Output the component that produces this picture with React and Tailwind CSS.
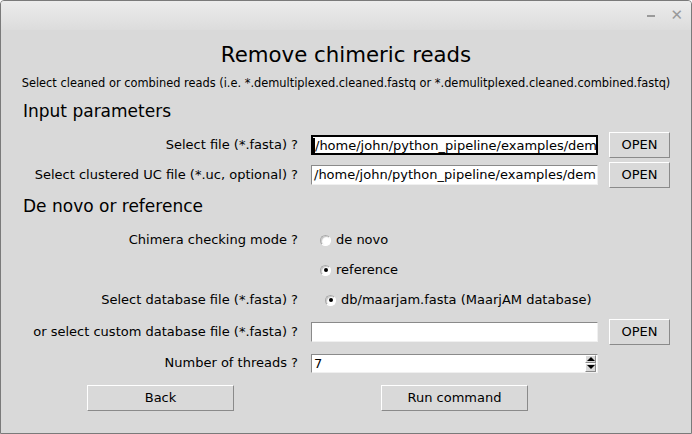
import React from "react";

const FONT = { fontFamily: '"DejaVu Sans", sans-serif' };

function Label({ children }) {
  return (
    <div className="w-[298px] shrink-0 pr-[1px] text-right text-[13px] text-black">
      {children}
    </div>
  );
}

function Entry({ value, focused }) {
  return (
    <div
      className={`ml-[12px] h-[20px] w-[287px] overflow-hidden whitespace-nowrap bg-white text-[13px] leading-[18px] text-black ${
        focused
          ? "border-2 border-black"
          : "border border-t-[#8a8a8a] border-l-[#8a8a8a] border-b-[#f0f0f0] border-r-[#f0f0f0]"
      }`}
    >
      <span className={focused ? "border-l-2 border-black pl-0" : "pl-[2px]"}>{value}</span>
    </div>
  );
}

function TkButton({ children, className = "" }) {
  return (
    <button
      className={`h-[26px] border border-t-white border-l-white border-b-[#8a8a8a] border-r-[#8a8a8a] bg-[#d9d9d9] text-[13px] text-black ${className}`}
    >
      {children}
    </button>
  );
}

function Radio({ checked }) {
  return (
    <span className="flex h-[11px] w-[11px] items-center justify-center rounded-full border border-t-[#a8a8a8] border-l-[#a8a8a8] border-b-white border-r-white bg-white shadow-[inset_1px_1px_1px_#c4c4c4]">
      {checked && <span className="h-[4px] w-[4px] rounded-full bg-black" />}
    </span>
  );
}

export default function App() {
  return (
    <div
      style={FONT}
      className="h-[434px] w-[692px] overflow-hidden rounded-t-[4px] border border-[#7a7a7a] bg-[#d9d9d9]"
    >
      <div className="flex h-[29px] items-center justify-end gap-[15px] bg-gradient-to-b from-[#ececec] to-[#dcdcdc] pr-[8px]">
        <span className="mt-[1px] h-[2px] w-[8px] bg-[#9a9a9a]" />
        <span className="text-[15px] font-bold leading-none text-[#9a9a9a]">✕</span>
      </div>

      <div className="flex h-[44px] items-end justify-center pb-[3px] text-[21.3px] text-black">
        Remove chimeric reads
      </div>
      <div className="flex h-[20px] items-center justify-center text-[11.4px] text-black">
        Select cleaned or combined reads (i.e. *.demultiplexed.cleaned.fastq or *.demulitplexed.cleaned.combined.fastq)
      </div>

      <div className="flex h-[36px] items-center pl-[22px] text-[17px] text-black">Input parameters</div>

      <div className="flex h-[30px] items-center">
        <Label>Select file (*.fasta) ?</Label>
        <Entry focused value="/home/john/python_pipeline/examples/dem" />
        <TkButton className="ml-[11px] w-[61px]">OPEN</TkButton>
      </div>
      <div className="flex h-[30px] items-center">
        <Label>Select clustered UC file (*.uc, optional) ?</Label>
        <Entry value="/home/john/python_pipeline/examples/dem" />
        <TkButton className="ml-[11px] w-[61px]">OPEN</TkButton>
      </div>

      <div className="flex h-[34px] items-center pl-[22px] text-[17px] text-black">De novo or reference</div>

      <div className="flex h-[32px] items-center">
        <Label>Chimera checking mode ?</Label>
        <div className="ml-[21px] flex items-center gap-[5px] text-[13px] text-black">
          <Radio />
          de novo
        </div>
      </div>
      <div className="flex h-[28px] items-center">
        <Label />
        <div className="ml-[21px] flex items-center gap-[5px] text-[13px] text-black">
          <Radio checked />
          reference
        </div>
      </div>
      <div className="flex h-[32px] items-center">
        <Label>Select database file (*.fasta) ?</Label>
        <div className="ml-[26px] flex items-center gap-[5px] text-[13px] text-black">
          <Radio checked />
          db/maarjam.fasta (MaarjAM database)
        </div>
      </div>

      <div className="flex h-[32px] items-center">
        <Label>or select custom database file (*.fasta) ?</Label>
        <Entry value="" />
        <TkButton className="ml-[11px] w-[61px]">OPEN</TkButton>
      </div>
      <div className="flex h-[30px] items-center">
        <Label>Number of threads ?</Label>
        <div className="relative ml-[12px] h-[19px] w-[287px] border border-t-[#8a8a8a] border-l-[#8a8a8a] border-b-[#f0f0f0] border-r-[#f0f0f0] bg-white pl-[2px] text-[13px] leading-[17px] text-black">
          7
          <div className="absolute right-[1px] top-0 flex h-full w-[11px] flex-col">
            <div className="flex h-1/2 items-center justify-center border border-t-white border-l-white border-b-[#8a8a8a] border-r-[#8a8a8a] bg-[#d9d9d9]">
              <span className="h-0 w-0 border-x-[4px] border-b-[4px] border-x-transparent border-b-black" />
            </div>
            <div className="flex h-1/2 items-center justify-center border border-t-white border-l-white border-b-[#8a8a8a] border-r-[#8a8a8a] bg-[#d9d9d9]">
              <span className="h-0 w-0 border-x-[4px] border-t-[4px] border-x-transparent border-t-black" />
            </div>
          </div>
        </div>
      </div>

      <div className="flex h-[40px] items-center">
        <TkButton className="ml-[86px] w-[147px]">Back</TkButton>
        <TkButton className="ml-[147px] w-[147px]">Run command</TkButton>
      </div>
    </div>
  );
}
